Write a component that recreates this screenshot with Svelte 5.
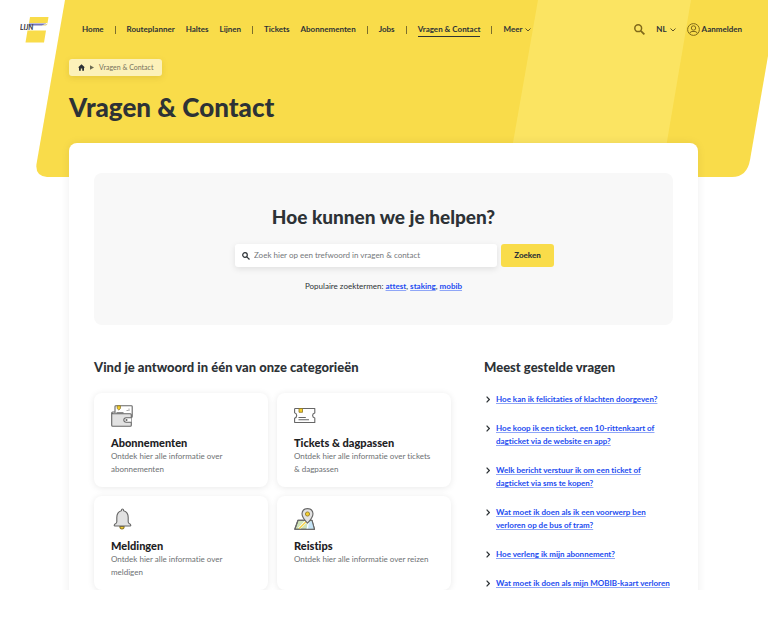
<script>
  const navGroups = [
    ['Home'],
    ['Routeplanner', 'Haltes', 'Lijnen'],
    ['Tickets', 'Abonnementen'],
    ['Jobs'],
    ['Vragen & Contact']
  ];
  const current = 'Vragen & Contact';

  const terms = ['attest', 'staking', 'mobib'];

  const categories = [
    { icon: 'wallet', title: 'Abonnementen', text: 'Ontdek hier alle informatie over abonnementen' },
    { icon: 'ticket', title: 'Tickets & dagpassen', text: 'Ontdek hier alle informatie over tickets & dagpassen' },
    { icon: 'bell', title: 'Meldingen', text: 'Ontdek hier alle informatie over meldigen' },
    { icon: 'map', title: 'Reistips', text: 'Ontdek hier alle informatie over reizen' }
  ];

  const questions = [
    'Hoe kan ik felicitaties of klachten doorgeven?',
    'Hoe koop ik een ticket, een 10-rittenkaart of dagticket via de website en app?',
    'Welk bericht verstuur ik om een ticket of dagticket via sms te kopen?',
    'Wat moet ik doen als ik een voorwerp ben verloren op de bus of tram?',
    'Hoe verleng ik mijn abonnement?',
    'Wat moet ik doen als mijn MOBIB-kaart verloren'
  ];

  let query = $state('');
</script>

<div class="page">
  <svg class="backdrop" viewBox="0 0 768 177" preserveAspectRatio="none" aria-hidden="true">
    <path d="M65 0H768V56L750 160Q747 177 732 177H47Q35 176 36.500 164Z" fill="#f9dc4a" />
    <path d="M538 0H691L661 177H507Z" fill="#fbe462" />
  </svg>

  <header>
    <a class="logo" href="#home" aria-label="De Lijn">
      <svg width="29" height="26" viewBox="0 0 29 26">
        <path d="M10 0H28.500L27.500 6H9Z M7.500 13.500H26L24 25.500H5.500Z" fill="#f9dc4a" />
        <path d="M9 6.500H26.500L22 8.600H8.600Z" fill="#7777b8" />
        <path d="M22 8.400L28 6.600L26 8.600Z" fill="#dccb78" />
        <text x="0" y="12.500" font-size="7" font-weight="900" font-style="italic" fill="#41434b">LIJN</text>
      </svg>
    </a>
    <nav aria-label="Hoofdnavigatie">
      {#each navGroups as group}
        {#each group as item}
          <a href="#nav" class:current={item === current}>{item}</a>
        {/each}
        <span class="sep"></span>
      {/each}
      <button class="plain">Meer
        <svg width="6" height="4" viewBox="0 0 6 4"><path d="M.5 .5L3 3L5.500 .5" /></svg>
      </button>
    </nav>
    <div class="tools">
      <button class="plain" aria-label="Zoeken op de site">
        <svg class="olive" width="11" height="11" viewBox="0 0 11 11"><circle cx="4.200" cy="4.200" r="3.400" stroke-width="1.500" /><path d="M6.800 6.800L10.400 10.400" stroke-width="1.800" /></svg>
      </button>
      <button class="plain">NL
        <svg width="6" height="4" viewBox="0 0 6 4"><path d="M.5 .5L3 3L5.500 .5" /></svg>
      </button>
      <a class="login" href="#login">
        <svg class="olive" width="13" height="13" viewBox="0 0 13 13"><circle cx="6.500" cy="6.500" r="5.900" /><circle cx="6.500" cy="5" r="2.200" /><path d="M2.800 10.500Q3 8.500 5 8.500H8Q10 8.500 10.200 10.500" /></svg>
        Aanmelden
      </a>
    </div>
  </header>

  <div class="intro">
    <nav class="crumbs" aria-label="Kruimelpad">
      <a href="#home" aria-label="Home">
        <svg width="7" height="7" viewBox="0 0 7 7"><path d="M3.500 .2L7 3.400H6V6.700H4.200V4.500H2.800V6.700H1V3.400H0Z" fill="#2d3236" /></svg>
      </a>
      <svg width="4" height="5" viewBox="0 0 4 5"><path d="M0 .3L4 2.500L0 4.700Z" fill="#6b6a52" /></svg>
      <span>Vragen &amp; Contact</span>
    </nav>
    <h1>Vragen &amp; Contact</h1>
  </div>

  <main>
    <section class="hero">
      <h2>Hoe kunnen we je helpen?</h2>
      <form onsubmit={(e) => e.preventDefault()}>
        <label class="field">
          <svg width="8" height="8" viewBox="0 0 8 8"><circle cx="3" cy="3" r="2.300" /><path d="M4.800 4.800L7.500 7.500" /></svg>
          <input type="text" aria-label="Zoekterm" placeholder="Zoek hier op een trefwoord in vragen & contact" bind:value={query} />
        </label>
        <button class="submit">Zoeken</button>
      </form>
      <p>
        Populaire zoektermen:
        {#each terms as term, i}<a href="#term">{term}</a>{i < terms.length - 1 ? ', ' : ''}{/each}
      </p>
    </section>

    <div class="columns">
      <section>
        <h3>Vind je antwoord in één van onze categorieën</h3>
        <div class="cards">
          {#each categories as c}
            <a class="card" href="#category">
              <svg width="22" height="22" viewBox="0 0 22 22" fill="none" stroke="#666" stroke-width="1.100" stroke-linejoin="round" aria-hidden="true">
                {#if c.icon === 'wallet'}
                  <path d="M4 8V1.500Q4 .7 4.800 .7H20.400Q21.200 .7 21.200 1.500V11.500Q21.200 12.500 20 12.500" fill="#fff" />
                  <path d="M6.200 .8H9.400V3.500L7.800 5L6.200 3.500Z" fill="#f5cf2c" stroke="#8c7524" stroke-width=".8" />
                  <path d="M18 3.500V6M15.500 5.500H17.500" stroke="#aaa" stroke-width="1" />
                  <path d="M3.800 7H1.700Q.7 7 .7 8V20.300Q.7 21.300 1.700 21.300H19.300Q20.300 21.300 20.300 20.300V9.800Q20.300 8.800 19.300 8.800H2.500Q.7 8.800 .7 7.800" fill="#e2e2e2" />
                  <path d="M5.500 7.800H12.500" />
                  <path d="M20.300 12.800H15.300Q12.800 13 12.800 15Q12.800 17 15.300 17.200H20.300" fill="#fff" />
                  <circle cx="15.500" cy="15" r=".5" />
                {:else if c.icon === 'ticket'}
                  <path d="M1.200 3.500H20.800V8Q18.600 8.500 18.600 10.500Q18.600 12.500 20.800 13V17.500H1.200Q.5 17.500 .6 16.800V13.200Q2.700 12.500 2.700 10.500Q2.700 8.500 .6 7.800V4.200Q.6 3.500 1.200 3.500Z" fill="#fff" />
                  <path d="M5 3.500H8.500V7.300H5Z" fill="#f5cf2c" stroke="#8c7524" stroke-width=".8" />
                  <path d="M4.500 12.500H11.800M4.500 14.700H15" />
                {:else if c.icon === 'bell'}
                  <path d="M8.800 18.500H13.200Q13 21 11 21Q9 21 8.800 18.500Z" fill="#f5cf2c" stroke="#8c7524" />
                  <path d="M11.500 1Q12.600 1 12.600 2.700Q17.200 4 17.200 9.500V14Q17.400 15.500 19.300 16.300Q20.500 17.800 19 18H4Q2.500 17.800 3.700 16.300Q5.600 15.500 5.800 14V9.500Q5.800 4 10.400 2.700Q10.400 1 11.500 1Z" fill="#e2e2e2" />
                {:else}
                  <path d="M4 12.300H18L20.500 21.300H.8Z" fill="#cfe3b7" />
                  <path d="M12 21L15 14.500L18 12.600L20 20.700Z" fill="#c5e4f7" stroke="none" />
                  <path d="M5 20.700L12 13.500L15 15" stroke="#fff" stroke-width="2.600" />
                  <path d="M5 20.700L12 13.800" stroke="#f6d447" stroke-width="1.400" />
                  <path d="M14 15L13.500 20.700" stroke="#fff" stroke-width="1.200" />
                  <path d="M4 12.300H18L20.500 21.300H.8Z" />
                  <path d="M13.500 15.200Q8 9.500 8 5.800Q8.300 .6 13.500 .6Q18.700 .6 19 5.800Q19 9.500 13.500 15.200Z" fill="#e2e2e2" />
                  <circle cx="13.500" cy="6" r="2.100" fill="#f5cf2c" stroke="#8c7524" stroke-width=".8" />
                {/if}
              </svg>
              <h4>{c.title}</h4>
              <p>{c.text}</p>
            </a>
          {/each}
        </div>
      </section>

      <section>
        <h3>Meest gestelde vragen</h3>
        <ul>
          {#each questions as q}
            <li>
              <svg width="4" height="7" viewBox="0 0 4 7"><path d="M.6 .7L3.300 3.500L.6 6.300" /></svg>
              <a href="#question">{q}</a>
            </li>
          {/each}
        </ul>
      </section>
    </div>
  </main>
</div>

<style>
  :global(body) {
    background: #fff;
  }
  .page {
    position: relative;
    height: calc(100vh - 40px);
    min-height: 300px;
    overflow: hidden;
    font-family: Lato, "Noto Sans", sans-serif;
    font-size: 8px;
    line-height: 13px;
    font-variant-ligatures: none;
    color: #2d3236;
  }
  .page :global(*) {
    box-sizing: border-box;
  }
  h1, h2, h3, h4, p, ul {
    margin: 0;
    padding: 0;
  }
  a {
    color: inherit;
    text-decoration: none;
  }
  svg {
    flex: none;
  }
  button {
    font: inherit;
    color: inherit;
    border: 0;
    cursor: pointer;
  }
  .backdrop {
    position: absolute;
    top: 0;
    left: 0;
    width: 100%;
    height: 177px;
  }
  header {
    position: relative;
    display: flex;
    align-items: center;
    height: 59px;
    padding: 0 26px 0 20px;
    font-weight: 700;
    white-space: nowrap;
  }
  .logo {
    width: 62px;
  }
  .logo svg {
    display: block;
  }
  header nav {
    display: flex;
    align-items: center;
    gap: 11px;
  }
  .current {
    box-shadow: 0 1px #2d3236;
  }
  .sep {
    width: 1px;
    height: 8px;
    background: #7c6e2c;
  }
  .plain {
    display: flex;
    align-items: center;
    gap: 3px;
    padding: 0;
    background: none;
  }
  .plain svg, .olive {
    fill: none;
    stroke: #5f5427;
  }
  .plain .olive, .olive {
    stroke: #80691a;
  }
  .tools {
    display: flex;
    align-items: center;
    gap: 11px;
    margin-left: auto;
  }
  .login {
    display: flex;
    align-items: center;
    gap: 2px;
  }
  .intro {
    position: relative;
    padding: 0 9%;
  }
  .crumbs {
    display: inline-flex;
    align-items: center;
    gap: 5px;
    height: 17px;
    padding: 0 9px;
    border-radius: 3px;
    background: #fcf1b9;
    box-shadow: 0 2px 6px rgba(120, 95, 0, 0.15);
    color: #77725c;
    font-size: 7px;
    vertical-align: top;
  }
  .crumbs a {
    display: flex;
  }
  h1 {
    padding: 15px 0 20px;
    font-size: 26px;
    line-height: 32px;
    font-weight: 900;
  }
  main {
    position: relative;
    margin: 0 70px 0 69px;
    padding: 30px 25px;
    min-height: 500px;
    background: #fff;
    border-radius: 8px;
    box-shadow: 0 0 10px rgba(0, 0, 0, 0.07);
  }
  .hero {
    display: flex;
    flex-direction: column;
    align-items: center;
    padding: 32px 20px;
    background: #f8f8f8;
    border-radius: 8px;
  }
  h2 {
    font-size: 19px;
    line-height: 24px;
    font-weight: 900;
  }
  form {
    display: flex;
    gap: 4px;
    width: 100%;
    max-width: 341px;
    margin: 15px 0 13px;
    padding-left: 22px;
  }
  .field {
    display: flex;
    flex: 1;
    align-items: center;
    gap: 4px;
    height: 23px;
    padding: 0 7px;
    border-radius: 3px;
    background: #fff;
    box-shadow: 0 2px 6px rgba(0, 0, 0, 0.1);
  }
  .field svg {
    fill: none;
    stroke: #2d3236;
    stroke-width: 1.2;
  }
  input {
    flex: 1;
    min-width: 0;
    padding: 0;
    border: 0;
    outline: 0;
    background: none;
    font: inherit;
    color: inherit;
  }
  input::placeholder {
    color: #74777a;
    opacity: 1;
  }
  .submit {
    width: 53px;
    padding: 0;
    border-radius: 3px;
    background: #f9dc4a;
    font-weight: 900;
  }
  .hero p a, li a {
    color: #1c4cf0;
    font-weight: 700;
    text-decoration: underline;
    text-decoration-color: #8fa6f7;
    text-decoration-thickness: 1px;
    text-underline-offset: 1px;
  }
  .columns {
    display: grid;
    grid-template-columns: 357fr 189fr;
    gap: 33px;
    padding-top: 34px;
  }
  h3 {
    font-size: 13px;
    line-height: 16px;
    font-weight: 900;
  }
  .cards {
    display: grid;
    grid-template-columns: 1fr 1fr;
    gap: 9px;
    margin-top: 18px;
  }
  .card {
    min-height: 94px;
    padding: 12px 17px 11px;
    border-radius: 8px;
    box-shadow: 0 1px 7px rgba(0, 0, 0, 0.09);
    color: #6d7073;
  }
  .card svg {
    display: block;
  }
  h4 {
    margin-top: 8px;
    font-size: 11px;
    line-height: 15px;
    font-weight: 900;
    color: #1d2124;
  }
  ul {
    display: flex;
    flex-direction: column;
    gap: 16px;
    margin-top: 18px;
    list-style: none;
  }
  li {
    display: flex;
    gap: 6px;
    padding-left: 2px;
  }
  li svg {
    margin-top: 3px;
    fill: none;
    stroke: #2d3236;
    stroke-width: 1.2;
  }
</style>
